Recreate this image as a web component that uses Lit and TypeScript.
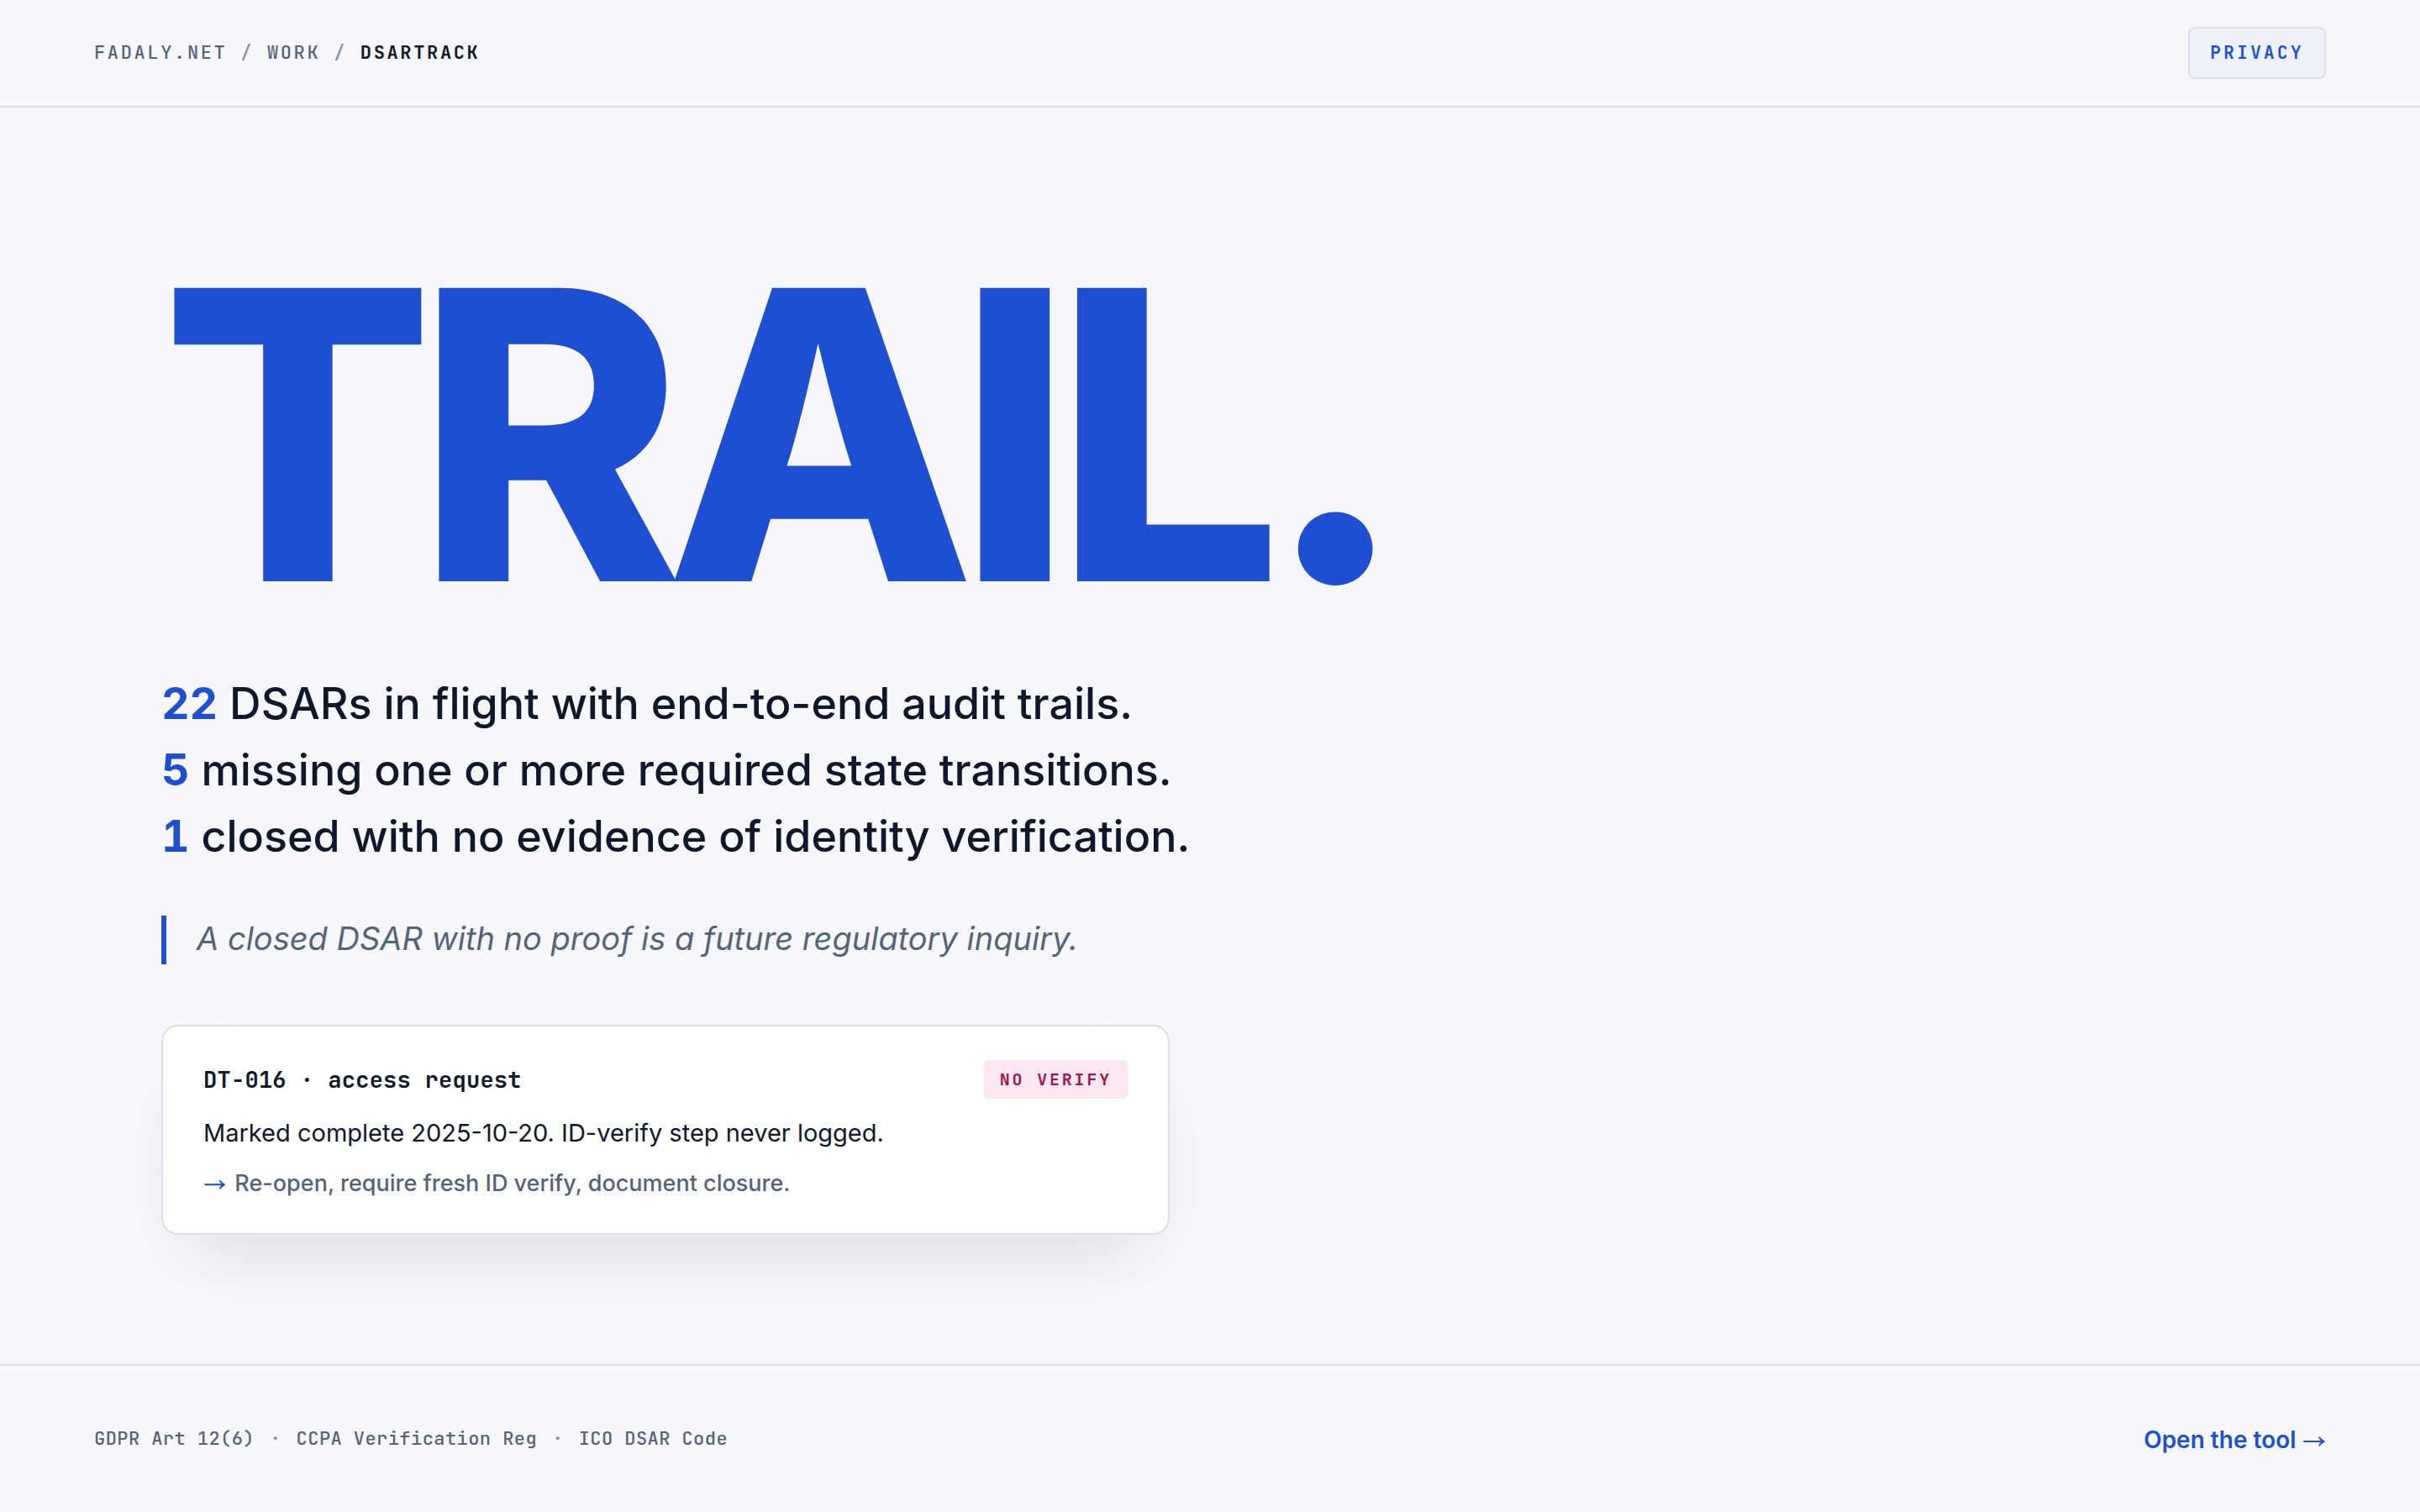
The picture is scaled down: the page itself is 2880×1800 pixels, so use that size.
import { LitElement, html, css } from 'lit';
import { customElement, property } from 'lit/decorators.js';

interface Stat {
  count: number;
  text: string;
}

/**
 * Card describing a single request with a finding and the next step
 *
 * @element request-card
 */
@customElement('request-card')
export class RequestCard extends LitElement {
  @property({ type: String })
  heading = '';

  @property({ type: String })
  tag = '';

  @property({ type: String })
  finding = '';

  @property({ type: String })
  action = '';

  static styles = css`
    :host {
      display: block;
    }

    .card {
      display: flex;
      flex-direction: column;
      gap: 18px;
      box-sizing: border-box;
      padding: 40px 48px;
      border: 2px solid #d9e2ec;
      border-radius: 20px;
      background: #ffffff;
      box-shadow: 0 2px 0 #eef1f8, 0 48px 96px -32px rgba(0, 0, 0, 0.12);
    }

    .head {
      display: flex;
      align-items: center;
      justify-content: space-between;
    }

    .heading {
      margin: 0;
      font: 600 27px/40px 'JetBrains Mono', 'Liberation Mono', monospace;
      letter-spacing: 0.01em;
    }

    .tag {
      padding: 8px 19px;
      border-radius: 6px;
      background: #fce7f3;
      color: #9d174d;
      font: 600 20px/30px 'JetBrains Mono', 'Liberation Mono', monospace;
      letter-spacing: 0.14em;
    }

    .finding {
      margin: 0;
      font-size: 29px;
      line-height: 46px;
    }

    .action {
      display: flex;
      gap: 10px;
      margin: 0;
      color: #556378;
      font-size: 27px;
      font-weight: 500;
      line-height: 38px;
    }

    .arrow {
      color: #1f4fd1;
      font-family: 'Noto Sans Math', 'DejaVu Sans', sans-serif;
      font-weight: 400;
    }
  `;

  render() {
    return html`
      <article class="card">
        <div class="head">
          <h2 class="heading">${this.heading}</h2>
          <span class="tag">${this.tag}</span>
        </div>
        <p class="finding">${this.finding}</p>
        <p class="action"><span class="arrow">→</span><span>${this.action}</span></p>
      </article>
    `;
  }
}

@customElement('app-root')
export class AppRoot extends LitElement {
  private stats: Stat[] = [
    { count: 22, text: 'DSARs in flight with end-to-end audit trails.' },
    { count: 5, text: 'missing one or more required state transitions.' },
    { count: 1, text: 'closed with no evidence of identity verification.' },
  ];

  private sources = ['GDPR Art 12(6)', 'CCPA Verification Reg', 'ICO DSAR Code'];

  static styles = css`
    :host {
      display: flex;
      flex-direction: column;
      min-height: 100vh;
      background: #f7f8fc;
      color: #0f172a;
      font-family: Inter, sans-serif;
    }

    a {
      color: inherit;
      text-decoration: none;
    }

    .topbar {
      display: flex;
      align-items: center;
      justify-content: space-between;
      padding: 32px 112px;
      border-bottom: 2px solid #d9e2ec;
    }

    .crumbs {
      color: #556378;
      font: 500 22px/32px 'JetBrains Mono', 'Liberation Mono', monospace;
      letter-spacing: 0.12em;
    }

    .slash {
      color: #8391a7;
    }

    .current {
      color: #0f172a;
      font-weight: 600;
    }

    .badge {
      padding: 14px 24px;
      border: 2px solid #d9e2ec;
      border-radius: 8px;
      background: #eef1f8;
      color: #1f4fd1;
      font: 600 21px/30px 'JetBrains Mono', 'Liberation Mono', monospace;
      letter-spacing: 0.16em;
    }

    .hero {
      display: flex;
      flex: 1;
      flex-direction: column;
      align-items: flex-start;
      justify-content: center;
      padding: 80px 192px 61px;
    }

    .title {
      margin: 0 0 64px;
      color: #1f4fd1;
      font-size: 480px;
      font-weight: 800;
      line-height: 432px;
      letter-spacing: -0.045em;
    }

    .lead {
      margin: 0 0 55px;
      font-size: 52px;
      font-weight: 500;
      line-height: 79px;
    }

    .line {
      display: block;
    }

    .count {
      color: #1f4fd1;
      font-weight: 700;
      font-variant-numeric: tabular-nums;
    }

    .quote {
      margin: 0 0 72px;
      padding: 0 0 4px 36px;
      border-left: 6px solid #1f4fd1;
      color: #556378;
      font-size: 38px;
      font-style: italic;
      line-height: 54px;
    }

    .request {
      width: 100%;
      max-width: 1200px;
    }

    .footer {
      display: flex;
      align-items: center;
      justify-content: space-between;
      padding: 65px 112px;
      border-top: 2px solid #d9e2ec;
    }

    .sources {
      display: flex;
      gap: 18px;
      margin: 0;
      color: #556378;
      font: 500 22px/32px 'JetBrains Mono', 'Liberation Mono', monospace;
      letter-spacing: 0.02em;
    }

    .dot {
      color: #8391a7;
    }

    .open {
      padding-top: 2px;
      color: #1f4fd1;
      font-size: 28px;
      font-weight: 600;
      line-height: 42px;
    }

    .arrow {
      font-family: 'Noto Sans Math', 'DejaVu Sans', sans-serif;
      font-weight: 400;
      line-height: 1;
    }
  `;

  render() {
    return html`
      <header class="topbar">
        <nav class="crumbs" aria-label="Breadcrumb">
          <a href="#home">FADALY.NET</a>
          <span class="slash">/</span>
          <a href="#work">WORK</a>
          <span class="slash">/</span>
          <span class="current" aria-current="page">DSARTRACK</span>
        </nav>
        <span class="badge">PRIVACY</span>
      </header>

      <main class="hero">
        <h1 class="title">TRAIL.</h1>
        <p class="lead">
          ${this.stats.map((stat) => html`
            <span class="line"><strong class="count">${stat.count}</strong> ${stat.text}</span>
          `)}
        </p>
        <blockquote class="quote">A closed DSAR with no proof is a future regulatory inquiry.</blockquote>
        <request-card
          class="request"
          heading="DT-016 · access request"
          tag="NO VERIFY"
          finding="Marked complete 2025-10-20. ID-verify step never logged."
          action="Re-open, require fresh ID verify, document closure."
        ></request-card>
      </main>

      <footer class="footer">
        <p class="sources">
          ${this.sources.map((source, index) => html`
            ${index > 0 ? html`<span class="dot">·</span>` : ''}
            <span>${source}</span>
          `)}
        </p>
        <a class="open" href="#tool">Open the tool <span class="arrow">→</span></a>
      </footer>
    `;
  }
}

declare global {
  interface HTMLElementTagNameMap {
    'app-root': AppRoot;
    'request-card': RequestCard;
  }
}
